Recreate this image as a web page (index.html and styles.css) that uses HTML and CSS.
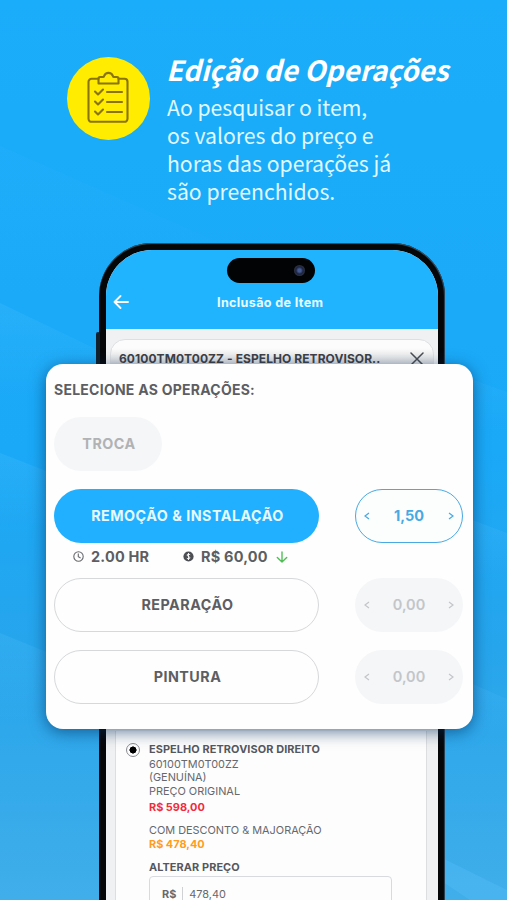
FILE: index.html
```html
<!DOCTYPE html>
<html lang="pt-BR">
  <head>
    <meta charset="UTF-8" />
    <meta name="viewport" content="width=device-width, initial-scale=1.0" />
    <title>Edição de Operações</title>
    <link rel="stylesheet" href="styles.css">
  </head>

  <body>
    <main class="page">
      <!-- diagonal light bands -->
      <svg class="backdrop" viewBox="0 0 507 900" preserveAspectRatio="none">
        <defs>
          <linearGradient id="band" x1="0" y1="0" x2="0" y2="1">
            <stop offset="0" stop-color="#5cc4ff" stop-opacity="0.2" />
            <stop offset="0.7" stop-color="#5cc4ff" stop-opacity="0" />
          </linearGradient>
        </defs>
        <path fill="url(#band)" opacity="0.3" d="M0 146L250 256V330H0z" />
        <path fill="url(#band)" d="M0 303L100 351V440H0z" />
        <path fill="url(#band)" d="M0 453L100 492V560H0z" />
        <path fill="url(#band)" d="M0 633L110 678V760H0z" />
        <path fill="url(#band)" opacity="0.6" d="M440 368L507 392V460H440z" />
        <path fill="url(#band)" d="M440 508L507 533V610H440z" />
        <path fill="url(#band)" d="M440 670L507 699V760H440z" />
        <path fill="#5cc4ff" opacity="0.3" d="M440 857L507 890V900H470L440 880z" />
      </svg>

      <header class="hero">
        <div class="badge">
          <svg width="42" height="52" viewBox="0 0 42 52" fill="none" stroke="#8a7408" stroke-width="2.1" stroke-linecap="round" stroke-linejoin="round">
            <path d="M11.500 7.800H4.500a3 3 0 0 0-3 3v37a3 3 0 0 0 3 3h33a3 3 0 0 0 3-3v-37a3 3 0 0 0-3-3h-6" />
            <path d="M11.500 12.500V7.500q0-1.500 1.500-1.500h3q.8 0 1.200-1.200a4.600 4.600 0 0 1 8.600 0q.4 1.200 1.200 1.200h3q1.500 0 1.500 1.500v5z" />
            <path d="M8 20.500l3 3 5-5M20 21h15M8 30.500l3 3 5-5M20 31h15M8 40.500l3 3 5-5M20 41h15" />
          </svg>
        </div>
        <div class="hero-copy">
          <h1>Edição de Operações</h1>
          <p>Ao pesquisar o item,<br>os valores do preço e<br>horas das operações já<br>são preenchidos.</p>
        </div>
      </header>

      <section class="phone">
        <span class="side-button"></span>
        <div class="screen">
          <div class="app-bar">
            <span class="island"><i class="lens"></i></span>
            <div class="bar-row">
              <svg width="16" height="14" viewBox="0 0 16 14" fill="none" stroke="#fff" stroke-width="1.8" stroke-linecap="round" stroke-linejoin="round">
                <path d="M15 7H1.500M7.500 1L1.500 7l6 6" />
              </svg>
              <span class="bar-title">Inclusão de Item</span>
            </div>
          </div>

          <div class="sheet-head">
            <span class="sheet-title">60100TM0T00ZZ - ESPELHO RETROVISOR..</span>
            <svg width="14" height="14" viewBox="0 0 14 14" stroke="#4a4c52" stroke-width="1.5" stroke-linecap="round">
              <path d="M1 1l12 12M13 1L1 13" />
            </svg>
          </div>

          <div class="item">
            <span class="radio"></span>
            <div class="item-info">
              <p class="item-name">ESPELHO RETROVISOR DIREITO</p>
              <p class="item-code">60100TM0T00ZZ</p>
              <p class="item-type">(GENUÍNA)</p>
              <p class="item-label">PREÇO ORIGINAL</p>
              <p class="price price-old">R$ 598,00</p>
              <p class="item-discount">COM DESCONTO &amp; MAJORAÇÃO</p>
              <p class="price price-new">R$ 478,40</p>
              <p class="item-edit">ALTERAR PREÇO</p>
              <div class="price-input"><b>R$</b><span>478,40</span></div>
            </div>
          </div>
        </div>
      </section>

      <section class="card">
        <h2>SELECIONE AS OPERAÇÕES:</h2>
        <div class="pill pill-disabled">TROCA</div>

        <div class="row">
          <div class="pill pill-active">REMOÇÃO &amp; INSTALAÇÃO</div>
          <div class="stepper stepper-active">
            <svg class="chevron" viewBox="0 0 6 8"><path d="M5 1L1 4l4 3" /></svg>
            <span>1,50</span>
            <svg class="chevron" viewBox="0 0 6 8"><path d="M1 1l4 3-4 3" /></svg>
          </div>
        </div>

        <div class="summary">
          <svg width="11" height="11" viewBox="0 0 11 11" fill="none" stroke="#686a6e" stroke-width="1.100">
            <circle cx="5.500" cy="5.500" r="4.700" />
            <path d="M5.300 2.600v3l2.300 1.400" />
          </svg>
          <span class="hours">2.00 HR</span>
          <svg width="11" height="11" viewBox="0 0 11 11" fill="none">
            <circle cx="5.500" cy="5.500" r="5.100" fill="#4c4e53" />
            <path d="M7.200 3.700Q5.500 2.700 4.300 3.500T5.500 5.400 6.700 7.500 3.800 7.300M5.500 2v7" stroke="#fff" stroke-width="0.900" />
          </svg>
          <span class="amount">R$ 60,00</span>
          <svg width="12" height="12" viewBox="0 0 12 12" fill="none" stroke="#4fbf55" stroke-width="1.400" stroke-linecap="round" stroke-linejoin="round">
            <path d="M6 1v10M1.300 6.500L6 11l4.700-4.500" />
          </svg>
        </div>

        <div class="row">
          <div class="pill">REPARAÇÃO</div>
          <div class="stepper">
            <svg class="chevron" viewBox="0 0 6 8"><path d="M5 1L1 4l4 3" /></svg>
            <span>0,00</span>
            <svg class="chevron" viewBox="0 0 6 8"><path d="M1 1l4 3-4 3" /></svg>
          </div>
        </div>
        <div class="row row-last">
          <div class="pill">PINTURA</div>
          <div class="stepper">
            <svg class="chevron" viewBox="0 0 6 8"><path d="M5 1L1 4l4 3" /></svg>
            <span>0,00</span>
            <svg class="chevron" viewBox="0 0 6 8"><path d="M1 1l4 3-4 3" /></svg>
          </div>
        </div>
      </section>
    </main>
  </body>
</html>
```

FILE: styles.css
```css
* {
  box-sizing: border-box;
}
body {
  margin: 0;
  font-family: Inter, 'Liberation Sans', sans-serif;
}
h1,
h2,
p {
  margin: 0;
  white-space: nowrap;
}
svg {
  display: block;
  flex-shrink: 0;
}

.page {
  position: relative;
  width: 507px;
  height: 900px;
  overflow: hidden;
  background: linear-gradient(180deg, #1aadfa 0%, #1aa9f7 50%, #26a5ec 72%, #40aee9 100%);
}
.backdrop {
  position: absolute;
  inset: 0;
  width: 100%;
  height: 100%;
}

/* hero */
.hero {
  position: relative;
  display: flex;
  height: 243px;
  padding: 50px 0 0 67px;
  gap: 17px;
  font-family: 'Noto Sans CJK SC', 'Noto Sans', sans-serif;
}
.badge {
  display: flex;
  align-items: center;
  justify-content: center;
  width: 83px;
  height: 83px;
  margin-top: 7px;
  padding: 0 1px 3px 0;
  border-radius: 50%;
  background: #ffec00;
}
.hero-copy {
  color: #e0f8ff;
}
.hero-copy h1 {
  margin: -1px 0 0 -1px;
  color: #fff;
  font-size: 27.8px;
  font-style: italic;
  font-weight: 700;
  line-height: 40px;
}
.hero-copy p {
  margin-top: 4px;
  font-size: 21.2px;
  line-height: 28px;
}

/* phone */
.phone {
  position: relative;
  width: 346px;
  height: 720px;
  margin-left: 99px;
  padding: 7px 7px 0;
  border-radius: 53px 53px 0 0;
  background: #050608;
  box-shadow: inset 0 1px 1px #47545e, inset -1px 0 1px #29475a;
}
.side-button {
  position: absolute;
  left: -3px;
  top: 89px;
  width: 4px;
  height: 40px;
  border-radius: 2px;
  background: #10202c;
}
.screen {
  height: 100%;
  overflow: hidden;
  border-radius: 46px 46px 0 0;
  background: #f0f1f2;
}
.app-bar {
  display: flex;
  flex-direction: column;
  align-items: center;
  height: 79px;
  padding-top: 8px;
  background: #20b4ff;
}
.island {
  display: flex;
  align-items: center;
  justify-content: flex-end;
  width: 88px;
  height: 25px;
  margin-right: 2px;
  padding-right: 10px;
  border-radius: 13px;
  background: #020305;
}
.lens {
  width: 11px;
  height: 11px;
  border-radius: 50%;
  background: radial-gradient(#455a91 0 20%, #1c2544 45%, #31353d 75%);
}
.bar-row {
  display: flex;
  align-items: center;
  align-self: stretch;
  height: 18px;
  margin-top: 10px;
  padding-left: 7px;
}
.bar-title {
  margin-left: 88px;
  color: #e8fbff;
  font-size: 12.6px;
  font-weight: 700;
  letter-spacing: 0.35px;
}
.sheet-head {
  display: flex;
  align-items: center;
  justify-content: space-between;
  height: 46px;
  margin: 10px 4px 0;
  padding: 0 9px 7px 8px;
  border: 1px solid #dedfe1;
  border-radius: 15px 15px 0 0;
  background: linear-gradient(#fcfcfc 20%, #d2d3d5 65%);
}
.sheet-title {
  color: #3e4047;
  font-size: 12px;
  font-weight: 700;
  letter-spacing: 0.07px;
  white-space: nowrap;
}

.item {
  display: flex;
  width: 312px;
  height: 230px;
  margin: 346px 0 0 9px;
  padding: 11px 0 0 10px;
  border: 1px solid #dddee0;
  border-top: 0;
  background: #fdfdfd;
}
.radio {
  width: 14px;
  height: 14px;
  margin: 1px 9px 0 0;
  border: 1px solid #8b8c90;
  border-radius: 50%;
  background: radial-gradient(circle, #000 0 3.3px, transparent 3.8px);
}
.item-info {
  color: #66686d;
  font-size: 10.9px;
  line-height: 14px;
}
.item-name,
.item-edit {
  color: #55575d;
  font-weight: 700;
  letter-spacing: 0.1px;
}

/* operations card */
.card {
  position: absolute;
  left: 46px;
  top: 364px;
  width: 427px;
  height: 365px;
  padding: 17px 10px 0 8px;
  border-radius: 17px;
  background: #fefefe;
  box-shadow: 0 3px 16px rgba(0, 45, 90, 0.6);
  color: #5c5e63;
}
.card h2 {
  font-size: 14px;
  font-weight: 700;
  letter-spacing: 0.25px;
  line-height: 18px;
}
.row {
  display: flex;
  justify-content: space-between;
}
.row-last {
  margin-top: 18px;
}
.pill {
  display: flex;
  align-items: center;
  justify-content: center;
  width: 265px;
  height: 54px;
  padding: 0 0 1px 2px;
  border: 1px solid #d7d8da;
  border-radius: 27px;
  font-size: 14.3px;
  font-weight: 700;
  letter-spacing: 0.5px;
}
.pill-disabled {
  width: 108px;
  margin: 18px 0;
  border: 0;
  background: #f4f6f8;
  color: #b0b2b5;
}
.pill-active {
  border: 0;
  background: #20b0ff;
  color: #e6f9ff;
}
.stepper {
  display: flex;
  align-items: center;
  justify-content: space-between;
  width: 108px;
  height: 54px;
  padding: 0 9px 1px;
  border-radius: 27px;
  background: #f4f6f8;
  color: #c3c5c9;
  font-size: 14.5px;
  font-weight: 600;
}
.stepper-active {
  padding: 0 8px 1px;
  border: 1.5px solid #48a9e3;
  background: #fcfdfd;
  color: #48a9e3;
  font-weight: 700;
}
.chevron {
  width: 6px;
  height: 8px;
  fill: none;
  stroke: currentColor;
  stroke-width: 1.2;
}
.summary {
  display: flex;
  align-items: center;
  height: 35px;
  padding: 0 0 8px 19px;
  font-size: 14.5px;
  font-weight: 700;
  letter-spacing: 0.2px;
}
.hours {
  width: 99px;
  padding-left: 7px;
}
.amount {
  width: 82px;
  padding-left: 7px;
}

/* item details */
.item-code {
  margin-top: 1px;
}
.item-type {
  margin-top: 1px;
  line-height: 11px;
}
.item-label {
  margin-top: 1px;
}
.price {
  font-weight: 700;
}
.price-old {
  margin-top: 2px;
  color: #f02c3c;
}
.item-discount {
  margin-top: 9px;
}
.price-new {
  color: #ff9c1c;
}
.item-edit {
  margin-top: 9px;
}
.price-input {
  display: flex;
  align-items: center;
  width: 243px;
  height: 36px;
  margin-top: 2px;
  padding-left: 12px;
  border: 1px solid #d9dadd;
  border-radius: 4px;
}
.price-input span {
  margin-left: 6px;
  padding-left: 6px;
  border-left: 1px solid #d0d1d3;
}
```
